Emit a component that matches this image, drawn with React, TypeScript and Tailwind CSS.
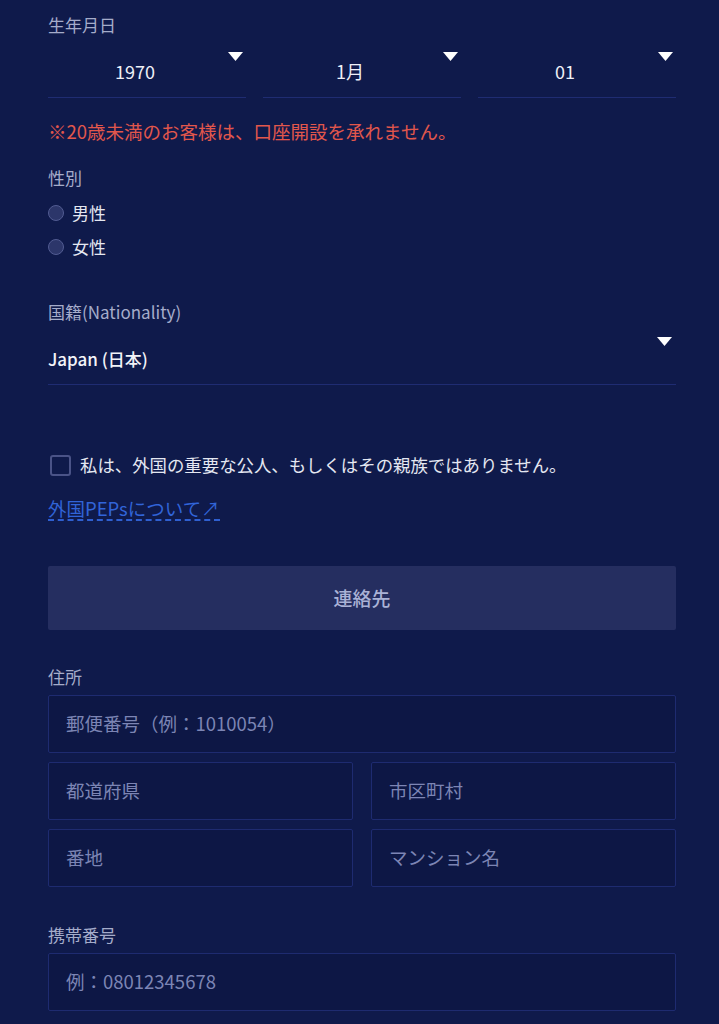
import React from 'react'

const font = { fontFamily: '"Noto Sans CJK JP", "Noto Sans", sans-serif' }

const Caret = ({ className }: { className?: string }) => (
  <svg width="15" height="9" viewBox="0 0 15 9" className={className}>
    <path d="M0 0 H15 L7.5 9 Z" fill="#ffffff" />
  </svg>
)

const DateSelect = ({ value }: { value: string }) => (
  <div className="relative flex h-[52px] flex-1 items-center justify-center border-b border-[#1f2c72] pr-[24px]">
    <span className="text-[18px] text-[#eef0f7]">{value}</span>
    <Caret className="absolute right-[3px] top-[6px]" />
  </div>
)

const Radio = ({ label }: { label: string }) => (
  <label className="flex h-[34px] items-center gap-2">
    <span className="size-4 rounded-full border border-[#525c92] bg-[#2c366a]" />
    <span className="text-[17px] text-[#e4e7f1]">{label}</span>
  </label>
)

const Field = ({ placeholder }: { placeholder: string }) => (
  <div className="flex h-[58px] flex-1 items-center rounded-[2px] border border-[#1e2b70] bg-[#0d1745] pl-[17px]">
    <span className="text-[18.5px] text-[#7c85b4]">{placeholder}</span>
  </div>
)

export default function App() {
  return (
    <div className="min-h-[1024px] w-full bg-[#0f1a4b]" style={font}>
      <div className="ml-[48px] w-[628px] pt-[13px]">
        {/* 生年月日 */}
        <p className="text-[17px] leading-6 text-[#a5acca]">生年月日</p>
        <div className="mt-[9px] flex gap-[17px]">
          <DateSelect value="1970" />
          <DateSelect value="1月" />
          <DateSelect value="01" />
        </div>
        <p className="mt-[21px] text-[18.5px] leading-6 text-[#e2574c]">
          ※20歳未満のお客様は、口座開設を承れません。
        </p>

        {/* 性別 */}
        <p className="mt-[23px] text-[17px] leading-6 text-[#a5acca]">性別</p>
        <div className="mt-[6px] flex flex-col">
          <Radio label="男性" />
          <Radio label="女性" />
        </div>

        {/* 国籍 */}
        <p className="mt-[36px] text-[17px] leading-6 text-[#a5acca]">国籍(Nationality)</p>
        <div className="relative mt-[5px] flex h-[56px] items-center border-b border-[#1f2c72] pt-[5px]">
          <span className="text-[17px] font-medium text-[#f2f3f8]">Japan (日本)</span>
          <Caret className="absolute right-[4px] top-[8px]" />
        </div>

        {/* PEPs */}
        <label className="mt-[67px] flex items-center gap-[9px] pl-[2px]">
          <span className="size-[21px] rounded-[3px] border-2 border-[#4a5387]" />
          <span className="text-[17.4px] text-[#e4e7f1]">
            私は、外国の重要な公人、もしくはその親族ではありません。
          </span>
        </label>
        <a className="mt-[19px] inline-block border-b-2 border-dashed border-[#2f5fd0] text-[18.5px] leading-[22px] text-[#3164d8]">
          外国PEPsについて↗
        </a>

        {/* 連絡先 */}
        <div className="mt-[45px] flex h-[64px] items-center justify-center rounded-[2px] bg-[#252e60]">
          <span className="text-[19px] font-medium text-[#aab2d6]">連絡先</span>
        </div>

        {/* 住所 */}
        <p className="mt-[35px] text-[17px] leading-6 text-[#a5acca]">住所</p>
        <div className="mt-[6px] flex flex-col gap-[9px]">
          <div className="flex">
            <Field placeholder="郵便番号（例：1010054）" />
          </div>
          <div className="flex gap-[18px]">
            <Field placeholder="都道府県" />
            <Field placeholder="市区町村" />
          </div>
          <div className="flex gap-[18px]">
            <Field placeholder="番地" />
            <Field placeholder="マンション名" />
          </div>
        </div>

        {/* 携帯番号 */}
        <p className="mt-[36px] text-[17px] leading-6 text-[#a5acca]">携帯番号</p>
        <div className="mt-[6px] flex">
          <Field placeholder="例：08012345678" />
        </div>
      </div>
    </div>
  )
}
